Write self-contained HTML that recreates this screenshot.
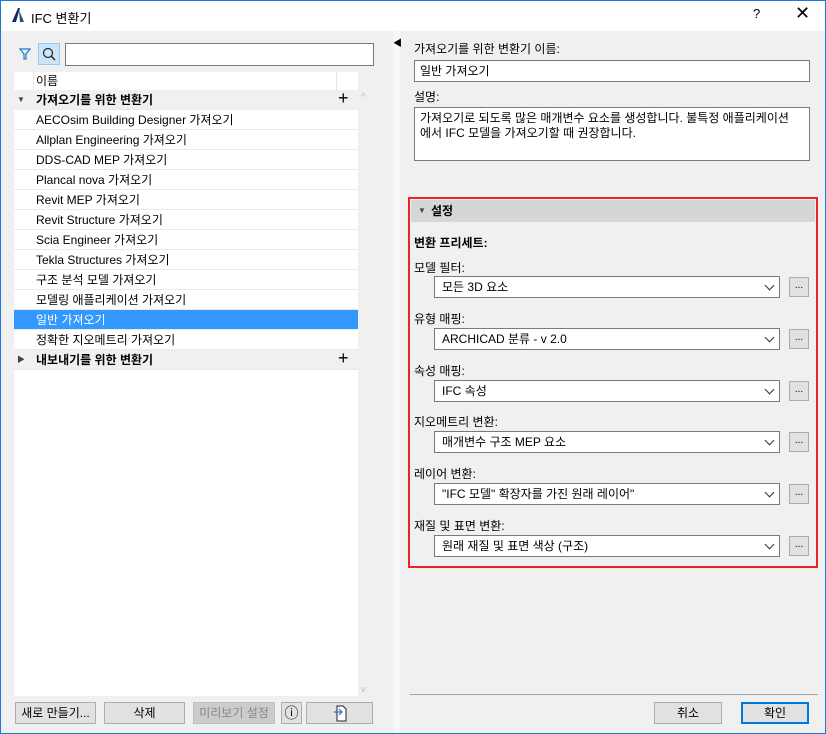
<!DOCTYPE html>
<html><head><meta charset="utf-8"><style>
*{box-sizing:border-box;margin:0;padding:0}
body{width:826px;height:734px;background:#f0f0f0;font-family:"Liberation Sans","Noto Sans CJK KR",sans-serif;font-size:12px;color:#000;position:relative;overflow:hidden}
.a{position:absolute}
.win{left:0;top:0;width:826px;height:734px;border:1px solid #1e78d0}
.title{left:1px;top:1px;width:824px;height:30px;background:#fff}
.row{position:absolute;left:14px;width:344px;height:20px;line-height:20px;padding-left:22px;background:#fff;border-bottom:1px solid #eaeaea}
.grp{background:#f0f0f0;font-weight:bold;padding-left:22px}
.sel{background:#3399ff;color:#fff}
.inp{background:#fff;border:1px solid #7a7a7a}
.lbl{position:absolute;left:414px}
.sbox{position:absolute;left:434px;width:346px;height:22px;background:#fff;border:1px solid #7a7a7a;line-height:20px;padding-left:7px}
.sbox:after{content:"";position:absolute;right:6px;top:5px;width:6px;height:6px;border-right:1px solid #333;border-bottom:1px solid #333;transform:rotate(45deg)}
.dot{position:absolute;left:789px;width:20px;height:20px;background:#e1e1e1;border:1px solid #adadad;font-size:10px;text-align:center;line-height:16px}
.btn{position:absolute;top:702px;height:22px;background:#e1e1e1;border:1px solid #adadad;text-align:center;line-height:20px}
</style></head><body>
<div class="a title"></div>
<svg class="a" style="left:10px;top:7px" width="16" height="16"><path d="M2 15 L8 1 L10 1 L6 15Z" fill="#1a2b5a"/><path d="M9 3 L14 15 L10 15Z" fill="#2a4a8a"/></svg>
<div class="a" style="left:31px;top:8px;font-size:13px">IFC 변환기</div>
<div class="a" style="left:753px;top:6px;font-size:13px">?</div>
<div class="a" style="left:795px;top:3px;font-size:18px">✕</div>

<svg class="a" style="left:19px;top:47px" width="12" height="14"><path d="M1 2 H11 L7 7 V12 H5 V7Z" fill="none" stroke="#1e78d0" stroke-width="1.2"/></svg>
<div class="a" style="left:38px;top:43px;width:22px;height:22px;background:#cce4f7;border:1px solid #99c9ef"></div>
<svg class="a" style="left:41px;top:46px" width="16" height="16"><circle cx="7" cy="7" r="4.5" fill="none" stroke="#222" stroke-width="1.2"/><path d="M10 10 L14 14" stroke="#222" stroke-width="1.4"/></svg>
<div class="a inp" style="left:65px;top:43px;width:309px;height:23px"></div>

<div class="a" style="left:14px;top:72px;width:344px;height:624px;background:#fff"></div>
<div class="a" style="left:358px;top:90px;width:14px;height:606px;background:#f0f0f0"></div>
<div class="row" style="top:72px;height:19px;line-height:18px;padding-left:22px">이름</div>
<div class="a" style="left:33px;top:72px;width:1px;height:19px;background:#e5e5e5"></div>
<div class="a" style="left:336px;top:72px;width:1px;height:19px;background:#e5e5e5"></div>
<div class="row grp" style="top:90px">가져오기를 위한 변환기</div>
<div class="a" style="left:17px;top:95px;font-size:8px;color:#444">▼</div>
<div class="a" style="left:338px;top:88px;font-size:18px">+</div>
<div class="a" style="left:361px;top:92px;font-size:10px;color:#bbb">^</div>
<div class="row" style="top:110px">AECOsim Building Designer 가져오기</div>
<div class="row" style="top:130px">Allplan Engineering 가져오기</div>
<div class="row" style="top:150px">DDS-CAD MEP 가져오기</div>
<div class="row" style="top:170px">Plancal nova 가져오기</div>
<div class="row" style="top:190px">Revit MEP 가져오기</div>
<div class="row" style="top:210px">Revit Structure 가져오기</div>
<div class="row" style="top:230px">Scia Engineer 가져오기</div>
<div class="row" style="top:250px">Tekla Structures 가져오기</div>
<div class="row" style="top:270px">구조 분석 모델 가져오기</div>
<div class="row" style="top:290px">모델링 애플리케이션 가져오기</div>
<div class="row sel" style="top:310px">일반 가져오기</div>
<div class="row" style="top:330px">정확한 지오메트리 가져오기</div>
<div class="row grp" style="top:350px">내보내기를 위한 변환기</div>
<div class="a" style="left:17px;top:354px;font-size:8px;color:#444">▶</div>
<div class="a" style="left:338px;top:348px;font-size:18px">+</div>
<div class="a" style="left:361px;top:684px;font-size:9px;color:#bbb">v</div>

<div class="a" style="left:393px;top:31px;width:7px;height:703px;background:#f7f7f7"></div>
<div class="a" style="left:393px;top:36px;font-size:9px">◀</div>

<div class="lbl" style="top:40px">가져오기를 위한 변환기 이름:</div>
<div class="a inp" style="left:414px;top:60px;width:396px;height:22px;line-height:20px;padding-left:5px">일반 가져오기</div>
<div class="lbl" style="top:88px">설명:</div>
<div class="a inp" style="left:414px;top:107px;width:396px;height:54px;padding:3px 20px 0 5px;line-height:15px">가져오기로 되도록 많은 매개변수 요소를 생성합니다. 불특정 애플리케이션에서 IFC 모델을 가져오기할 때 권장합니다.</div>

<div class="a" style="left:408px;top:197px;width:410px;height:371px;border:2px solid #e8232a"></div>
<div class="a" style="left:411px;top:200px;width:404px;height:22px;background:#d6d6d6;border-radius:2px;line-height:22px;padding-left:20px;font-weight:bold">설정</div>
<div class="a" style="left:418px;top:206px;font-size:8px;color:#444">▼</div>
<div class="lbl" style="top:234px;font-weight:bold">변환 프리세트:</div>
<div class="lbl" style="top:259px">모델 필터:</div>
<div class="sbox" style="top:276px">모든 3D 요소</div><div class="dot" style="top:277px">...</div>
<div class="lbl" style="top:310px">유형 매핑:</div>
<div class="sbox" style="top:328px">ARCHICAD 분류 - v 2.0</div><div class="dot" style="top:329px">...</div>
<div class="lbl" style="top:362px">속성 매핑:</div>
<div class="sbox" style="top:380px">IFC 속성</div><div class="dot" style="top:381px">...</div>
<div class="lbl" style="top:413px">지오메트리 변환:</div>
<div class="sbox" style="top:431px">매개변수 구조 MEP 요소</div><div class="dot" style="top:432px">...</div>
<div class="lbl" style="top:465px">레이어 변환:</div>
<div class="sbox" style="top:483px">"IFC 모델" 확장자를 가진 원래 레이어"</div><div class="dot" style="top:484px">...</div>
<div class="lbl" style="top:517px">재질 및 표면 변환:</div>
<div class="sbox" style="top:535px">원래 재질 및 표면 색상 (구조)</div><div class="dot" style="top:536px">...</div>

<div class="a" style="left:410px;top:694px;width:408px;height:1px;background:#a0a0a0"></div>
<div class="btn" style="left:15px;width:81px">새로 만들기...</div>
<div class="btn" style="left:104px;width:81px">삭제</div>
<div class="btn" style="left:193px;width:82px;background:#cccccc;border-color:#bfbfbf;color:#888">미리보기 설정</div>
<div class="btn" style="left:281px;width:21px;font-size:14px">ⓘ</div>
<div class="btn" style="left:306px;width:67px"><svg width="14" height="18" style="margin-top:1px"><path d="M4 2 H10 L13 5 V17 H4Z" fill="#fff" stroke="#222"/><path d="M1 8 H9 M6 5 L9 8 L6 11" fill="none" stroke="#1e78d0" stroke-width="1.2"/></svg></div>
<div class="btn" style="left:654px;width:68px">취소</div>
<div class="btn" style="left:741px;width:68px;border:2px solid #0078d7;line-height:18px">확인</div>
<div class="win a"></div>
</body></html>
